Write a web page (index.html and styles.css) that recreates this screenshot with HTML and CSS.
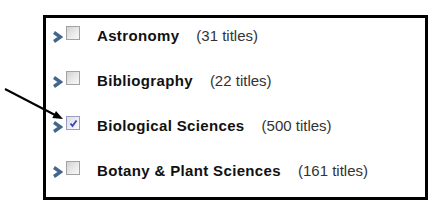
FILE: index.html
```html
<!DOCTYPE html>
<html lang="en">
<head>
    <meta charset="UTF-8">
    <title>Subject list</title>
    <link rel="stylesheet" href="styles.css">
</head>
<body>
    <div class="panel">
        <div class="row">
            <svg class="chevron" width="11" height="12" viewBox="0 0 11 12"><polyline points="2,1.5 8.5,6 2,10.5" /></svg>
            <span class="check"></span>
            <span class="label">Astronomy</span>
            <span class="count">(31 titles)</span>
        </div>
        <div class="row">
            <svg class="chevron" width="11" height="12" viewBox="0 0 11 12"><polyline points="2,1.5 8.5,6 2,10.5" /></svg>
            <span class="check"></span>
            <span class="label">Bibliography</span>
            <span class="count">(22 titles)</span>
        </div>
        <div class="row">
            <svg class="chevron" width="11" height="12" viewBox="0 0 11 12"><polyline points="2,1.5 8.5,6 2,10.5" /></svg>
            <span class="check checked"><svg width="11" height="11" viewBox="0 0 11 11"><polyline points="2.5,5.5 4.5,8 8.5,2.5" /></svg></span>
            <span class="label">Biological Sciences</span>
            <span class="count">(500 titles)</span>
        </div>
        <div class="row">
            <svg class="chevron" width="11" height="12" viewBox="0 0 11 12"><polyline points="2,1.5 8.5,6 2,10.5" /></svg>
            <span class="check"></span>
            <span class="label">Botany &amp; Plant Sciences</span>
            <span class="count">(161 titles)</span>
        </div>
    </div>
    <!-- pointer drawn over the page -->
    <svg class="pointer" width="432" height="205" viewBox="0 0 432 205">
        <line x1="5" y1="89" x2="56" y2="115.5" />
        <polygon points="63,119 52.3,118 56,110.9" />
    </svg>
</body>
</html>
```

FILE: styles.css
```css
body {
    margin: 0;
    background: #fff;
    font-family: 'Liberation Sans', Arial, sans-serif;
    font-size: 15px;
    position: relative;
    width: 432px;
    height: 205px;
    overflow: hidden;
}
.panel {
    margin: 15px 0 0 43px;
    width: 379px;
    height: 179px;
    border: 3px solid #000;
}
.row {
    display: flex;
    align-items: center;
    height: 45px;
    box-sizing: border-box;
    padding: 0 0 10px 6px;
}
.chevron {
    margin-top: 3px;
    flex: none;
}
.chevron polyline {
    fill: none;
    stroke: #42678c;
    stroke-width: 3.4;
    stroke-linejoin: miter;
}
.check {
    width: 12px;
    height: 12px;
    margin: 0 0 5px 3px;
    border: 1px solid #a2a2a2;
    background: linear-gradient(135deg, #d2d2d2 0%, #ececec 60%, #f8f8f8 100%);
    flex: none;
    display: flex;
    align-items: center;
    justify-content: center;
}
.check.checked {
    border-color: #9a9cc4;
    background: linear-gradient(135deg, #dcdcea 0%, #f2f2f8 70%, #fafafa 100%);
}
.check polyline {
    fill: none;
    stroke: #3b47a6;
    stroke-width: 1.8;
}
.label {
    margin-left: 17px;
    font-weight: bold;
    letter-spacing: 0.35px;
    color: #111;
    white-space: nowrap;
}
.count {
    margin-left: 17px;
    color: #333;
    white-space: nowrap;
}
.pointer {
    position: absolute;
    left: 0;
    top: 0;
    pointer-events: none;
}
.pointer line {
    stroke: #000;
    stroke-width: 2;
}
.pointer polygon {
    fill: #000;
}
```
